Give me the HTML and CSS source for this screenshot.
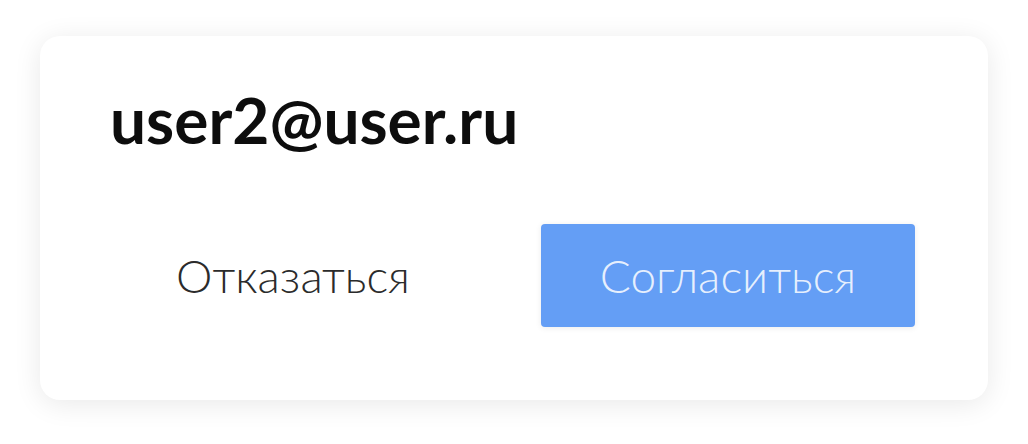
FILE: index.html
```html
<!DOCTYPE html>
<html lang="ru">
<head>
<meta charset="utf-8">
<link rel="stylesheet" href="styles.css">
</head>
<body>
<div class="card">
  <h1 class="title">user2@user.ru</h1>
  <div class="actions">
    <button class="btn btn-ghost">Отказаться</button>
    <button class="btn btn-primary">Согласиться</button>
  </div>
</div>
</body>
</html>
```
FILE: styles.css
```css
html, body {
  margin: 0;
  padding: 0;
  background: #ffffff;
}
body {
  padding: 36px 40px 44px 40px;
  font-family: Lato, "Noto Sans", sans-serif;
}
.card {
  box-sizing: border-box;
  width: 948px;
  height: 364px;
  background: #fff;
  border-radius: 20px;
  box-shadow: 0 4px 28px rgba(0, 0, 0, 0.09);
  padding: 0 73px 0 66px;
  display: flex;
  flex-direction: column;
}
.title {
  margin: 52px 0 0 4px;
  font-size: 64px;
  font-weight: 700;
  line-height: 64px;
  color: #0d0d0d;
}
.actions {
  margin-top: 72px;
  display: flex;
  gap: 61px;
}
.btn {
  width: 374px;
  height: 103px;
  border: none;
  border-radius: 4px;
  font-family: Lato, "Noto Sans", sans-serif;
  font-size: 46px;
  font-weight: 300;
  cursor: pointer;
  padding: 0;
}
.btn-ghost {
  background: transparent;
  color: #2b2b2b;
}
.btn-primary {
  background: #649ef5;
  color: rgba(255, 255, 255, 0.85);
  box-shadow: 0 1px 6px rgba(0, 0, 0, 0.08);
}
```
